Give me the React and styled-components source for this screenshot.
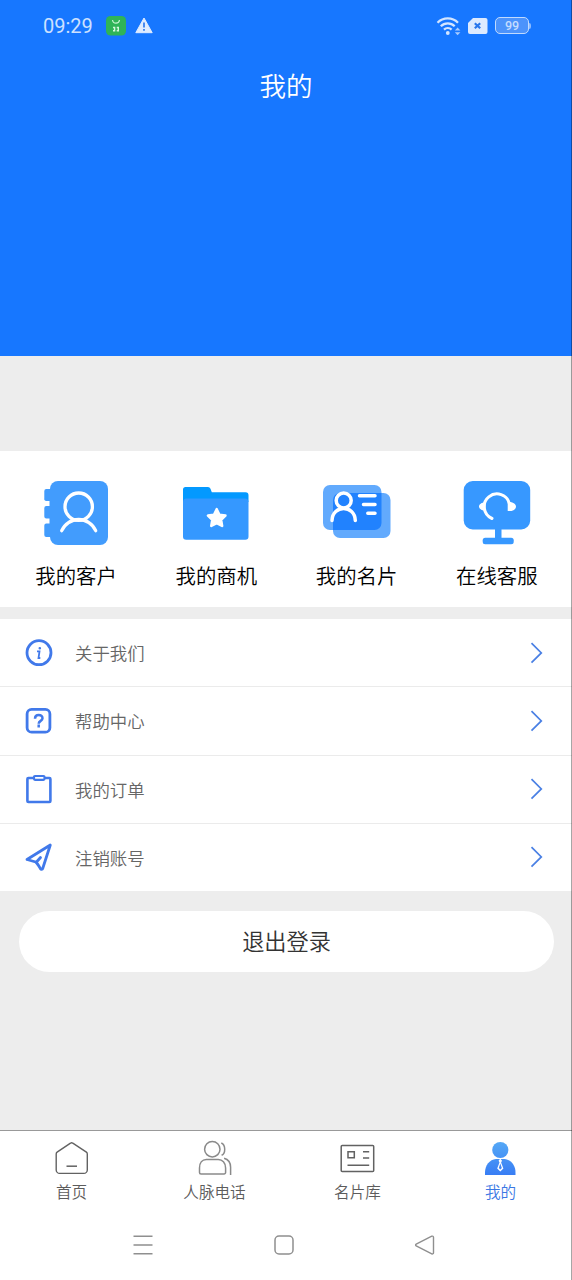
import styled, { createGlobalStyle } from "styled-components";

const GlobalStyle = createGlobalStyle`
  * {
    box-sizing: border-box;
  }
  body {
    margin: 0;
    background: #ededed;
    font-family: "Noto Sans CJK SC", sans-serif;
  }
  svg {
    display: block;
    flex-shrink: 0;
  }
`;

const Screen = styled.div`
  position: relative;
  display: flex;
  flex-direction: column;
  width: 572px;
  height: 1280px;
  overflow: hidden;
  background: #ededed;

  &::after {
    content: "";
    position: absolute;
    top: 0;
    right: 0;
    width: 1px;
    height: 100%;
    background: rgba(0, 0, 0, 0.35);
  }
`;

const Header = styled.header`
  height: 356px;
  flex-shrink: 0;
  margin-bottom: 95px;
  background: #1777ff;
`;

const StatusBar = styled.div`
  display: flex;
  align-items: center;
  justify-content: space-between;
  height: 51px;
  padding: 0 41px 0 43px;
`;

const StatusGroup = styled.div`
  display: flex;
  align-items: center;
  gap: ${(props) => props.$gap}px;
`;

const Time = styled.span`
  width: 54px;
  font-family: Roboto, sans-serif;
  font-size: 20px;
  line-height: 24px;
  color: #cde1ff;
`;

const Title = styled.h1`
  margin: 14px 0 0;
  font-size: 26.5px;
  font-weight: 350;
  line-height: 40px;
  text-align: center;
  color: #fff;
`;

const Services = styled.section`
  display: grid;
  grid-template-columns: repeat(4, 1fr);
  height: 155.5px;
  flex-shrink: 0;
  padding: 27px 5px 0 6px;
  background: #fff;
`;

const Service = styled.div`
  display: flex;
  flex-direction: column;
  align-items: center;
  font-size: 20.4px;
  font-weight: 350;
  line-height: 30px;
  color: #000;
  gap: 10px;
`;

const Menu = styled.section`
  margin-top: 12.5px;
  flex-shrink: 0;
`;

const MenuItem = styled.div`
  display: flex;
  align-items: center;
  height: ${(props) => (props.$last ? 67 : 68.3)}px;
  padding: 0 28px 0 23px;
  background: #fff;
  border-bottom: ${(props) => (props.$last ? "none" : "1.5px solid #ebebeb")};
`;

const MenuText = styled.span`
  flex: 1;
  padding: 1px 0 0 20px;
  font-size: 17.4px;
  font-weight: 350;
  line-height: 26px;
  color: #666;
`;

const Logout = styled.button`
  height: 61px;
  flex-shrink: 0;
  margin: 20px 18px 0 19px;
  padding: 0 0 2px;
  border: none;
  border-radius: 31px;
  background: #fff;
  font-family: inherit;
  font-size: 22.2px;
  font-weight: 350;
  line-height: 34px;
  color: #333;
`;

const Bottom = styled.footer`
  margin-top: auto;
  height: 150px;
  flex-shrink: 0;
  border-top: 1px solid #999;
  background: #fff;
`;

const Tabs = styled.nav`
  display: grid;
  grid-template-columns: repeat(4, 143px);
  height: 80px;
  padding-top: 8px;
`;

const Tab = styled.div`
  display: flex;
  flex-direction: column;
  align-items: center;
  font-size: 15.6px;
  font-weight: 350;
  line-height: 24px;
  color: ${(props) => (props.$active ? "#3b78e4" : "#5c5c5c")};
`;

const SystemNav = styled.div`
  display: grid;
  grid-template-columns: repeat(3, 141px);
  justify-items: center;
  padding: 22px 0 0 72.5px;
`;

const AppBadge = () => (
  <svg width="20" height="20" viewBox="0 0 20 20">
    <rect width="20" height="19.500" rx="4.500" fill="#2fb457" />
    <path d="M6.500 4c.5 4.200 6.500 4.200 7 0" fill="none" stroke="#c5f3cf" strokeWidth="1.200" />
    <path d="M7 11.500h2.300M7 14.800h2.300M8.600 11v4.500M10.700 11.500H13M10.700 14.800H13M12.300 11v4.500" fill="none" stroke="#d5f7dc" strokeWidth="1.400" />
  </svg>
);

const Warning = () => (
  <svg width="18" height="17" viewBox="0 0 18 17">
    <path d="M9 1 17.200 15.700H.8z" fill="#deebff" stroke="#deebff" strokeLinejoin="round" />
    <path d="M9 5.500v5M9 12v1.800" stroke="#2d79ee" strokeWidth="1.700" />
  </svg>
);

const Wifi = () => (
  <svg width="25" height="20" viewBox="0 0 25 20">
    <g fill="none" stroke="#d3e5ff" strokeWidth="2.300">
      <path d="M1.500 6.700a14.500 14.500 0 0 1 20.500 0" />
      <path d="M4.800 10.300a9.800 9.800 0 0 1 13.900 0" />
      <path d="M8 13.700a5.500 5.500 0 0 1 7.600 0" />
    </g>
    <circle cx="11.800" cy="17" r="1.900" fill="#d3e5ff" />
    <path d="M18.800 14.600 21.600 11.500l2.800 3.100zM18.800 16.200h5.600L21.600 19.300z" fill="#a9ccff" />
  </svg>
);

const Sim = () => (
  <svg width="20" height="16" viewBox="0 0 20 16">
    <path d="M5 0H17.500a2 2 0 0 1 2 2v12a2 2 0 0 1-2 2H2a2 2 0 0 1-2-2V5z" fill="#dceaff" />
    <path d="m6.800 5.300 5.400 5m0-5-5.400 5" stroke="#2876ec" strokeWidth="2.200" />
  </svg>
);

const BatteryBox = styled.div`
  display: flex;
  align-items: center;
`;

const BatteryBody = styled.div`
  width: 34px;
  height: 17px;
  border: 1.5px solid #c0dafe;
  border-radius: 5px;
  background: #4c93fb;
  font-family: Roboto, sans-serif;
  font-size: 12.5px;
  font-weight: 500;
  line-height: 15px;
  text-align: center;
  color: #c4dcff;
`;

const BatteryTip = styled.div`
  width: 2px;
  height: 6px;
  border-radius: 0 2px 2px 0;
  background: #8bbaff;
`;

const CustomersIcon = () => (
  <svg width="72" height="72" viewBox="0 0 72 72">
    <rect x="10" y="3" width="58" height="64" rx="8" fill="#429cfd" />
    <path
      d="M12 11H6.300A2 2 0 0 0 4.300 13v7.500a2 2 0 0 0 2 2.500H9.500v5H6.300a2 2 0 0 0-2 2v8.500a2 2 0 0 0 2 2H9.500v5H6.300a2 2 0 0 0-2 2V57a2 2 0 0 0 2 2H12z"
      fill="#429cfd"
    />
    <g fill="none" stroke="#fff" strokeWidth="3.300" strokeLinecap="round">
      <circle cx="38.700" cy="28.700" r="13.700" />
      <path d="M21.700 52.700a18.500 18.500 0 0 1 34 0" />
    </g>
  </svg>
);

const BusinessIcon = () => (
  <svg width="72" height="72" viewBox="0 0 72 72">
    <path d="M3 24V11.500a2.500 2.500 0 0 1 2.500-2.500H28a3 3 0 0 1 2.500 1.800l1.300 3.500H65.500a3 3 0 0 1 3 3V24z" fill="#0399ff" />
    <path d="M3 24a3.500 3.500 0 0 1 3.500-3.500h58.500a3.500 3.500 0 0 1 3.500 3.500v34.500a3.200 3.200 0 0 1-3.200 3.200H6.200A3.200 3.200 0 0 1 3 58.500z" fill="#3598ff" />
    <path
      d="m36.700 31.200 2.700 5.500 6 .9-4.300 4.300 1 6-5.400-2.800-5.400 2.800 1-6-4.300-4.300 6-.9z"
      fill="#fff"
      stroke="#fff"
      strokeWidth="2.600"
      strokeLinejoin="round"
    />
  </svg>
);

const CardIcon = () => (
  <svg width="72" height="72" viewBox="0 0 72 72">
    <rect x="2" y="7" width="58.500" height="45" rx="7" fill="#62aafd" />
    <rect x="12" y="15" width="57.500" height="45" rx="7" fill="#62aafd" />
    <path d="M19 15H60.500v30a7 7 0 0 1-7 7H12V22a7 7 0 0 1 7-7z" fill="#2182fe" />
    <g fill="none" stroke="#fff" strokeWidth="3.500" strokeLinecap="round">
      <circle cx="22.700" cy="22.500" r="7.500" />
      <path d="M11 42.500c.5-16 22.800-16 23.300 0M38.500 17.700h15.500M42.500 26.400h11.500M46.800 35.300H54" />
    </g>
  </svg>
);

const SupportIcon = () => (
  <svg width="72" height="72" viewBox="0 0 72 72">
    <rect x="2.700" y="3" width="66.500" height="48.500" rx="9" fill="#3798ff" />
    <path d="M34 51h6.500v10H34z" fill="#3798ff" />
    <rect x="21.700" y="59.700" width="31" height="6.500" rx="2.500" fill="#3798ff" />
    <path d="M31 40.500A12.800 12.800 0 1 1 48.500 26" fill="none" stroke="#fff" strokeWidth="3" strokeLinecap="round" />
    <path d="M24.500 24v9c-4-.5-6.500-2.500-6.500-4.500s2.500-4 6.500-4.500zM46.700 24h3c3.300.5 5.300 2.500 5.300 4.500s-2 4-4.500 4.500h-3.800z" fill="#fff" />
  </svg>
);

const AboutIcon = () => (
  <svg width="32" height="32" viewBox="0 0 32 32" fill="none" stroke="#4179ea">
    <circle cx="16" cy="15.700" r="12" strokeWidth="2.800" />
    <path d="M14 14.300h2.500l-1 6.700h1.800" strokeWidth="1.800" />
    <circle cx="16.800" cy="11.200" r=".7" strokeWidth="1.200" />
  </svg>
);

const HelpIcon = () => (
  <svg width="32" height="32" viewBox="0 0 32 32" fill="none" stroke="#4179ea">
    <rect x="4.100" y="4.400" width="22.800" height="22.800" rx="4.500" strokeWidth="2.800" />
    <path d="M12 13.700c0-5 7.500-4.600 7.500-.5 0 2.800-3.800 2.600-3.800 5.600" strokeWidth="2.500" />
    <path d="M15.700 19.500v3" strokeWidth="2.500" />
  </svg>
);

const OrderIcon = () => (
  <svg width="32" height="32" viewBox="0 0 32 32" fill="none" stroke="#4179ea" strokeWidth="2.600" strokeLinejoin="round">
    <rect x="4.400" y="5" width="23" height="24" rx="1" />
    <rect x="11" y="3" width="10.500" height="3.800" rx="1" strokeWidth="2.200" fill="#fff" />
  </svg>
);

const SendIcon = () => (
  <svg width="32" height="32" viewBox="0 0 32 32" fill="none" stroke="#4179ea" strokeWidth="2.800" strokeLinejoin="round" strokeLinecap="round">
    <path d="M27.300 4 4 18.500l8.700 2.500c1.700 1.200 3.200 4 4.800 6.800.5.900 1.800.9 2.200-.3z" />
    <path d="m13.500 21 4-4.500" />
  </svg>
);

const Chevron = () => (
  <svg width="16" height="24" viewBox="0 0 16 24">
    <path d="m3.500 2.200 9.800 9.700-9.800 9.700" fill="none" stroke="#4a80e4" strokeWidth="1.700" />
  </svg>
);

const HomeIcon = () => (
  <svg width="38" height="40" viewBox="0 0 38 40" fill="none" stroke="#626262" strokeWidth="1.400">
    <path d="M17.500 4.200a2 2 0 0 1 2.300 0l13.600 9a2 2 0 0 1 .9 1.700v16a3.500 3.500 0 0 1-3.500 3.500H6.700a3.500 3.500 0 0 1-3.500-3.500V14.900a2 2 0 0 1 .9-1.700z" />
    <path d="M13.500 27.200H24" strokeWidth="1.500" />
  </svg>
);

const ContactsIcon = () => (
  <svg width="38" height="40" viewBox="0 0 38 40" fill="none" stroke="#8a8a8a" strokeWidth="1.500">
    <circle cx="16.300" cy="10.200" r="7.700" />
    <path d="M10.300 20.500h12c4 0 7.300 3.200 7.300 8.500v4.500a1.500 1.500 0 0 1-1.500 1.500H5a1.500 1.500 0 0 1-1.500-1.500V29c0-5.300 2.800-8.500 6.800-8.500z" />
    <path d="M25.300 4c4.500 2 4.500 10.300.3 12.300M28.100 19.200c4.700 1.300 6.500 4.500 6.500 9V36" />
  </svg>
);

const LibraryIcon = () => (
  <svg width="38" height="40" viewBox="0 0 38 40" fill="none" stroke="#626262" strokeWidth="1.500">
    <rect x="2.200" y="6.500" width="32.500" height="26" rx="1" />
    <path d="M9 12.700h6.300v6H9zM24 12.700h6.200M24 19h6.200M8.500 26.200h21.700" />
  </svg>
);

const MineIcon = () => (
  <svg width="38" height="40" viewBox="0 0 38 40">
    <defs>
      <linearGradient id="mine" x1="0" y1="0" x2="0" y2="40" gradientUnits="userSpaceOnUse">
        <stop offset="0" stopColor="#58acf6" />
        <stop offset="1" stopColor="#3478f4" />
      </linearGradient>
    </defs>
    <g fill="url(#mine)">
      <circle cx="18.300" cy="11" r="8.100" />
      <path d="M3 36v-2.500c0-7 4.500-13 11-13.500h8.500c6.500.5 11 6.500 11 13.500V36z" />
    </g>
    <path d="m18.300 19.500-1.700 2.300.9 1.600-2.300 6 3.100 3 3.100-3-2.300-6 .9-1.600z" fill="#fff" />
    <path d="m18.300 24.500-1.500 4.600 1.500 1.500 1.500-1.500z" fill="#4287f4" />
  </svg>
);

const services = [
  { name: "我的客户", Icon: CustomersIcon },
  { name: "我的商机", Icon: BusinessIcon },
  { name: "我的名片", Icon: CardIcon },
  { name: "在线客服", Icon: SupportIcon },
];

const menu = [
  { name: "关于我们", Icon: AboutIcon },
  { name: "帮助中心", Icon: HelpIcon },
  { name: "我的订单", Icon: OrderIcon },
  { name: "注销账号", Icon: SendIcon },
];

const tabs = [
  { name: "首页", Icon: HomeIcon },
  { name: "人脉电话", Icon: ContactsIcon },
  { name: "名片库", Icon: LibraryIcon },
  { name: "我的", Icon: MineIcon, active: true },
];

function App() {
  return (
    <Screen>
      <GlobalStyle />
      <Header>
        <StatusBar>
          <StatusGroup $gap={9}>
            <Time>09:29</Time>
            <AppBadge />
            <Warning />
          </StatusGroup>
          <StatusGroup $gap={7}>
            <Wifi />
            <Sim />
            <BatteryBox>
              <BatteryBody>99</BatteryBody>
              <BatteryTip />
            </BatteryBox>
          </StatusGroup>
        </StatusBar>
        <Title>我的</Title>
      </Header>

      <Services>
        {services.map(({ name, Icon }) => (
          <Service key={name}>
            <Icon />
            {name}
          </Service>
        ))}
      </Services>

      <Menu>
        {menu.map(({ name, Icon }, i) => (
          <MenuItem key={name} $last={i === menu.length - 1}>
            <Icon />
            <MenuText>{name}</MenuText>
            <Chevron />
          </MenuItem>
        ))}
      </Menu>

      <Logout>退出登录</Logout>

      <Bottom>
        <Tabs>
          {tabs.map(({ name, Icon, active }) => (
            <Tab key={name} $active={active}>
              <Icon />
              {name}
            </Tab>
          ))}
        </Tabs>
        <SystemNav>
          <svg width="24" height="24" viewBox="0 0 24 24">
            <path d="M2.500 3.200h19M2.500 12h19M2.500 20.700h19" stroke="#8f8f8f" strokeWidth="1.500" />
          </svg>
          <svg width="24" height="24" viewBox="0 0 24 24">
            <rect x="3" y="3" width="18" height="18" rx="4" fill="none" stroke="#8f8f8f" strokeWidth="1.500" />
          </svg>
          <svg width="24" height="24" viewBox="0 0 24 24">
            <path
              d="M3.200 11.100 18.800 3.200a1.200 1.200 0 0 1 1.700 1.100v15.400a1.200 1.200 0 0 1-1.700 1.100L3.200 12.900a1 1 0 0 1 0-1.800z"
              fill="none"
              stroke="#8f8f8f"
              strokeWidth="1.400"
            />
          </svg>
        </SystemNav>
      </Bottom>
    </Screen>
  );
}

export default App;
